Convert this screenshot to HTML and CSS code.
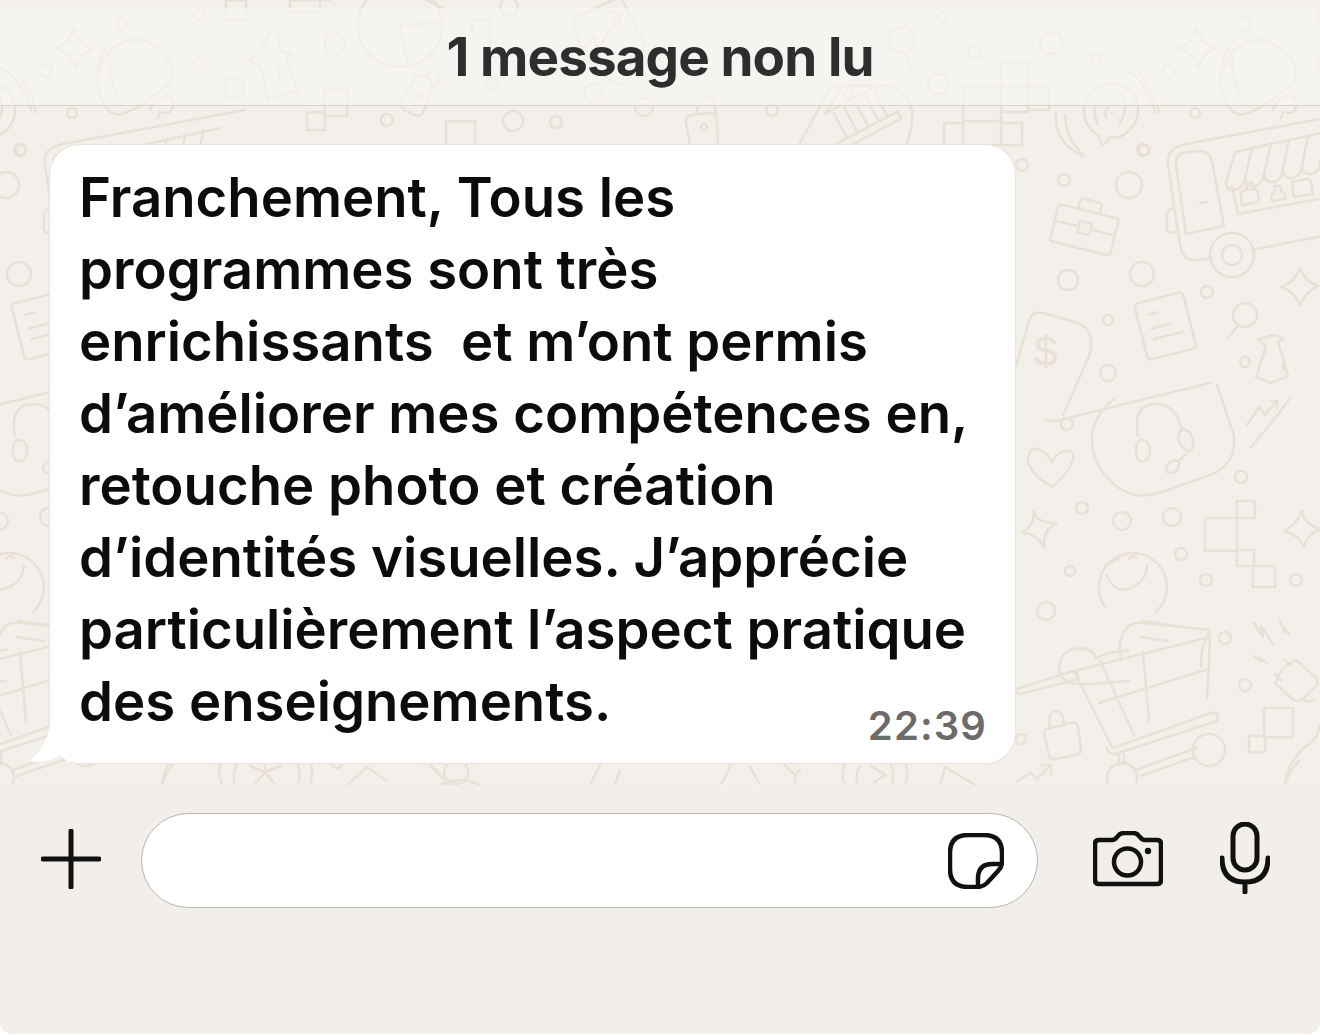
FILE: index.html
```html
<!DOCTYPE html>
<html lang="fr">
<head>
<meta charset="utf-8">
<title>1 message non lu</title>
<link rel="stylesheet" href="styles.css">
</head>
<body>
<div class="app">
  <main class="wall">
    <svg class="doodles" viewBox="0 0 1320 785" width="1320" height="785" aria-hidden="true">
      <defs>
        <g id="pattern">
          <!-- small circles -->
          <circle cx="122" cy="24" r="6"/><circle cx="46" cy="71" r="6"/><circle cx="199" cy="15" r="5"/><circle cx="199" cy="64" r="5"/><circle cx="234" cy="88" r="10"/><circle cx="335" cy="44" r="10"/><circle cx="72" cy="113" r="5"/><circle cx="21" cy="150" r="5"/><circle cx="387" cy="120" r="6"/><circle cx="513" cy="121" r="10"/><circle cx="556" cy="122" r="6"/><circle cx="492" cy="84" r="6"/><circle cx="593" cy="93" r="9"/><circle cx="644" cy="107" r="9"/><circle cx="509" cy="7" r="9"/><circle cx="772" cy="110" r="6"/><circle cx="938" cy="84" r="10"/><circle cx="974" cy="53" r="6"/><circle cx="942" cy="17" r="5"/><circle cx="1051" cy="43" r="11"/><circle cx="1096" cy="59" r="5"/>
          <circle cx="1022" cy="165" r="6"/><circle cx="1064" cy="180" r="6"/><circle cx="1129" cy="185" r="13"/><circle cx="1143" cy="150" r="6"/><circle cx="1068" cy="280" r="10"/><circle cx="1142" cy="274" r="12"/><circle cx="1207" cy="292" r="6"/><circle cx="1108" cy="320" r="5"/><circle cx="1108" cy="373" r="8"/><circle cx="1245" cy="362" r="5"/>
          <circle cx="1067" cy="424" r="6"/><circle cx="1241" cy="477" r="6"/><circle cx="1082" cy="508" r="6"/><circle cx="1122" cy="521" r="9"/><circle cx="1172" cy="517" r="9"/><circle cx="1181" cy="554" r="6"/><circle cx="1070" cy="571" r="5"/><circle cx="1206" cy="580" r="6"/><circle cx="1046" cy="611" r="9"/><circle cx="1225" cy="638" r="6"/><circle cx="1245" cy="685" r="6"/><circle cx="1296" cy="580" r="6"/><circle cx="1021" cy="739" r="5"/>
          <!-- sparkles -->
          <path d="M74 28q3 14 18 21q-13 5-17 19q-4-14-18-20q13-6 17-20z"/>
          <path d="M1300 268q4 13 18 18q-13 6-18 20q-4-14-19-19q14-5 19-19z"/>
          <path d="M1034 511q1 12 23 12q-14 5-13 24q-8-14-22-14q12-7 12-22z"/>
          <path d="M1302 511q2 13 18 18q-13 5-16 18q-6-13-20-16q13-7 18-20z"/>
          <!-- taco -->
          <path d="M100 95c-8-25 8-52 32-55c14-2 28 8 38 22c6 10 3 18-6 26c-14 12-28 22-42 26c-12 3-18-8-22-19z"/>
          <path d="M112 42c-14 12-18 32-12 56M107 55q6 4 1 10q5 4 1 10q6 4 3 10q5 4 3 10"/>
          <path d="M152 63h.1M158 72h.1M151 78h.1" stroke-width="3"/>
          <path d="M150 110q5-15 18-14q8 3 4 13q-3 6-10 3M158 118l2-6"/>
          <!-- pie -->
          <circle cx="400" cy="25" r="42"/><path d="M400 25l37 -2M400 25l8 42M408-10l38 20"/>
          <!-- plug -->
          <path d="M267 40q0-8 6-8t6 8l0 10l13 4l-6 3l12 34l-30 9l-7-34l-12-6l9-8z"/><path d="M278 68l2 14"/>
          <!-- lock tilted -->
          <path d="M404 110q-4-4-2-9l12-22q2-5 8-4l6 2q5 2 4 8l-8 26q-2 5-7 5z"/><path d="M429 80q-3-8 3-9q5 0 7 6t-6 10"/><circle cx="420" cy="95" r="2"/>
          <!-- squares -->
          <path d="M325 89h22v27h-22zM307 112h18v18h-18z"/>
          <path d="M446 121h29v30h-29zM472 30v-10h18v26"/>
          <path d="M226 0h20v20h-20zM290 0h30v12h-30zM330 0h-20"/>
          <!-- upward doodle -->
          <path d="M575 30q-4-12 8-16l30-14q8-4 12 5l18 34q4 8-4 14q-10 8-12 26q-1 6-8 4q-28-10-40-42zM582 50l12-14l4 12l22-34M606 12l15 2l-3 14"/>
          <!-- magnifier -->
          <circle cx="902" cy="40" r="13"/><path d="M906 54l7 16"/>
          <circle cx="1245" cy="315" r="12"/><path d="M1238 325l-10 13"/>
          <!-- bank -->
          <g transform="translate(858 112) rotate(-28)">
            <path d="M-30-14L0-30l30 16zM-30-14h60M-30 18h60M-35 26h70v-8h-70z"/><path d="M-22-10v28M-10-10v28M2-10v28M14-10v28M24-10v28"/><circle cx="0" cy="-20" r="4"/>
          </g>
          <path d="M799 145l28-52q4-8 14-8h40q22 0 30 22q4 14-5 38"/>
          <!-- lock -->
          <path d="M690 145l-4-22q-1-7 5-8l18-2q7 0 8 6l1 26M697 114q0-16 9-16t10 16"/><circle cx="704" cy="127" r="3"/>
          <!-- stepped squares -->
          <path d="M1001 62h27v24h-27zM963 86h38v35h-38zM1001 86h27v26h-27zM1028 86h21v24h-21zM944 123h19v22h-19zM963 121h38v24h-38zM1001 123h21v22h-21z"/>
          <!-- speech waves -->
          <path d="M1102 146l-3-10q-16-10-15-28q3-21 25-24q20-1 28 17q5 20-12 33q-9 5-14 3z"/>
          <path d="M1100 100q-10 10-2 24M1111 104q-8 6-5 14M1112 113h.1M1120 95q10 12 0 28M1137 70q16 18 22 42M1125 68q22 14 30 44M1065 115q0 22 18 40M1056 112q-3 30 27 44"/>
          <!-- truck -->
          <path d="M1368 110L1186 144q-20 4-18 20l12 81q3 17 18 15l14-2M1252 250l125-25"/>
          <path d="M1175 232q-10 3-8-8q-2-14 6-16M1176 166q-1-13 12-14l10-1q12 0 14 10l12 65l-38 8z"/><path d="M1200 203l8-1"/>
          <path d="M1235 152l108-24M1226 182l9-30"/>
          <path d="M1226 182q1 10 9 8t10-12q1 9 9 8t10-12q1 9 9 8t10-12q1 9 9 8t10-12q1 9 9 8t10-12q1 9 9 8"/>
          <path d="M1245 178l7-30M1264 174l7-30M1283 170l6-30M1302 166l6-30M1320 162l6-30"/>
          <path d="M1232 186l6 28l85-16M1242 205l-1-10q0-4 4-5l8-1q4 0 5 4l1 9zM1247 189q-1-5 3-6t5 5M1272 201q-2-6 3-10l-1-5h6l1 5q5 3 4 8zM1294 197l-2-12q0-4 4-4l10-2q4 0 5 3l2 12z"/>
          <circle cx="1232" cy="255" r="22"/><circle cx="1232" cy="255" r="10"/>
          <!-- briefcase -->
          <g transform="translate(1085 227) rotate(14)">
            <path d="M-28-16h56q3 0 3 3v32q0 3-3 3h-56q-3 0-3-3v-32q0-3 3-3zM-31 1h25M6 1h25M-6-5h12v12h-12zM-11-16v-8q0-3 3-3h16q3 0 3 3v8"/>
          </g>
          <!-- document -->
          <g transform="translate(1165 325) rotate(-14)">
            <path d="M-21-28h42q4 0 4 4v50q0 4-4 4h-42q-4 0-4-4v-50q0-4 4-4zM-14-14h10M-14 0h20M-14 11h30"/>
          </g>
          <!-- dollar tile -->
          <path d="M1005 392q4-4 8-16l16-55q3-10 14-8l32 9q16 5 16 21q0 12-6 22l-22 50"/>
          <text class="dollar" x="1034" y="366">$</text>
          <!-- plug right -->
          <path d="M1275 335l9 4l-6 3l10 34l-17 7l-15-6l10-30l-8-8zM1284 358l-1 12"/>
          <!-- big tile -->
          <path d="M1210 383l-146 36q-12 4-20 0M1290 398q-15 22-40 50"/>
          <!-- headset blob -->
          <path d="M1115 398q-23 18-23 42q0 17 10 31q14 20 34 24q12 2 32-5l42-15q16-6 22-20q5-18-1-28l-14-42"/>
          <path d="M1138 436q-6-32 18-32q20 0 26 26M1186 430q8 4 7 14t-7 6t-8-12q1-10 8-8zM1142 440q8 1 8 10t-6 11q-8 2-8-10q0-12 6-11zM1188 450q-2 6-10 11q-6-2-11 4q-3 8 4 8q8 0 8-10"/>
          <!-- heart -->
          <path d="M1052 487q-25-15-24-30q3-13 14-6q7 4 10 12q3-9 12-12q11-2 9 8q-4 15-21 28z"/>
          <!-- trending -->
          <path d="M1247 425l12-18l6 8l12-14M1270 401h7v7"/>
          <path d="M1016 782l14-9l7 6l14-14M1041 765h10v10"/>
          <!-- stepped squares right -->
          <path d="M1237 501h18v17h-18zM1205 518h32v33h-32zM1237 550h17v16h-17zM1253 566h22v21h-22z"/>
          <path d="M1264 708h29v29h-29zM1249 736h16v16h-16z"/>
          <!-- smile and cart -->
          <path d="M1106 608a34 34 0 1 1 50 4"/><path d="M1106 574q10 24 30 11q10-6 11-19M1112 563q2-5 7-3M1129 559q3-5 8-1"/>
          <path d="M1129 650q-22 2-33 8q-4-12-22-9q-15 3-15 21q2 16 30 14l40-3"/><path d="M1121 660q-5-22 8-34q4-4 15-3l66 7l-3 7q-6 8-6 30"/><path d="M1142 621l41 6M1140 637l27 4"/>
          <path d="M1020 688l53-17q6 1 5 8l-58 15q-4 0-4-3q0-2 4-3zM1074 671l136-34l-3 62M1074 671l38 76M1100 661l34 74M1143 652l6 70M1099 703l106-33M1113 748l98-35q7-2 7 4q0 4-4 5l-99 32q-6 1-8-6"/>
          <path d="M1119 755v10M1124 754v10M1136 770l60-22M1140 776l55-19"/>
          <circle cx="1122" cy="778" r="15"/><circle cx="1209" cy="750" r="16"/>
          <!-- right plug and bolts -->
          <path d="M1283 668l13-8l18 16q6 6 2 10l-13 13q-6 4-12-1l-16-15zM1281 680l-6-6M1290 665l-5-5M1302 699q4 4 14 1"/>
          <path d="M1254 623l9 14l-2-11l12 18M1280 620l4 12l-1-6l6 8M1254 656l8 6l-2-4l8 6"/>
          <!-- small lock -->
          <path d="M1046 729l25-6q6-1 7 4l3 22q0 5-5 6l-20 4q-6 1-7-4l-5-22q0-3 2-4zM1050 728q-3-16 6-17q8 0 8 14"/>
          <!-- tile bottom right -->
          <path d="M1285 785q3-26 25-42q8-5 10-18"/>
          <!-- bottom band -->
          <path d="M162 785q4-14 14-24M222 785q-6-16 1-30M310 785q5-16-2-28M235 785q-3-10 2-22M298 785q4-12-1-22"/>
          <path d="M265 772l-15-6M265 772l16-6M265 772l-10 12M265 772l10 12M265 772v-12"/><circle cx="337" cy="763" r="5"/>
          <path d="M347 785l20-18l20 14"/>
          <path d="M450 785l-20-20M440 785q20-10 40 0"/><circle cx="456" cy="772" r="12"/>
          <path d="M590 785l10-20M615 785l5-15M720 785q8-10 10-20M760 785l-10-18"/>
          <path d="M785 765l10 10v10M800 770l-5 5M845 785q-6-12 2-24M905 785q5-14-2-28M858 785q-4-10 2-18M892 785q3-10-1-20M870 766l16 9l-12 7"/>
          <path d="M940 785l5-18l30 18"/>
        </g>
      </defs>
      <use href="#pattern"/>
      <use href="#pattern" x="-1123"/>
      <use href="#pattern" x="1123"/>
    </svg>

    <header class="banner"><h1 class="banner-title">1 message non lu</h1></header>

    <article class="bubble">
      <svg class="bubble-tail" width="40" height="50" viewBox="0 0 40 50" aria-hidden="true">
        <path class="tail-edge" d="M21 0q0 28-20 46q-2 2 3 2q14 0 26-6q10 6 10 8v-50z"/>
      </svg>
      <p class="bubble-text">Franchement, Tous les<br>programmes sont très<br>enrichissants&nbsp; et m’ont permis<br>d’améliorer mes compétences en,<br>retouche photo et création<br>d’identités visuelles. J’apprécie<br>particulièrement l’aspect pratique<br>des enseignements.</p>
      <time class="bubble-time">22:39</time>
    </article>
  </main>

  <footer class="composer">
    <svg class="icon-plus" width="60" height="60" viewBox="0 0 60 60" aria-hidden="true">
      <path d="M30 2v56M2 30h56"/>
    </svg>
    <div class="field">
      <svg class="icon-sticker" width="56" height="56" viewBox="0 0 56 56" aria-hidden="true">
        <path d="M20 2h16q18 0 18 18v9q0 5-4 9L39 50q-4 4-10 4h-9Q2 54 2 36V20Q2 2 20 2z"/>
        <path d="M53 31H44q-13 0-14 13v10"/>
      </svg>
    </div>
    <svg class="icon-camera" width="70" height="56" viewBox="0 0 70 56" aria-hidden="true">
      <path d="M6 9h13q3 0 5-3l1-1q2-3 6-3h9q4 0 6 3l1 1q2 3 5 3h12q4 0 4 4v36q0 4-4 4H6q-4 0-4-4V13q0-4 4-4z"/>
      <circle cx="34.5" cy="31" r="13.5"/>
      <circle class="dot" cx="55" cy="20" r="3.2"/>
    </svg>
    <svg class="icon-mic" width="50" height="72" viewBox="0 0 50 72" aria-hidden="true">
      <rect x="13" y="2" width="24" height="46" rx="12"/>
      <path d="M2 36q0 24 23 24t23-24M25 60v10"/>
    </svg>
  </footer>
</div>
</body>
</html>
```

FILE: styles.css
```css
* { box-sizing: border-box; }

html, body {
  margin: 0;
  padding: 0;
  background: #ffffff;
}

body {
  font-family: "Inter", "Liberation Sans", sans-serif;
}

.app {
  width: 1320px;
  height: 1034px;
  display: flex;
  flex-direction: column;
  background: #f2efea;
  border-bottom-left-radius: 12px;
  border-bottom-right-radius: 12px;
  overflow: hidden;
}

.wall {
  position: relative;
  height: 785px;
  flex: none;
  padding-top: 8px;
  overflow: hidden;
  background: #f3f0eb;
}

.doodles {
  position: absolute;
  left: 0;
  top: 0;
  fill: none;
  stroke: #e8e1d6;
  stroke-width: 2.6;
  stroke-linecap: round;
  stroke-linejoin: round;
}

.dollar {
  font-family: "Liberation Sans", sans-serif;
  font-size: 42px;
  fill: #e8e1d6;
  stroke: none;
}

.banner {
  position: relative;
  height: 98px;
  display: flex;
  align-items: center;
  justify-content: center;
  background: rgba(248, 247, 243, 0.6);
  border-bottom: 1px solid #d6d3cd;
}

.banner-title {
  margin: 0;
  font-size: 53px;
  line-height: 56px;
  font-weight: 700;
  letter-spacing: -0.9px;
  color: #2e2e2e;
}

.bubble {
  position: relative;
  width: 965px;
  height: 618px;
  margin: 39px 0 0 50px;
  padding: 16px 29px 0;
  background: #ffffff;
  border-radius: 30px;
  box-shadow: 0 0 0 1px #e9e5de;
}

.bubble-tail {
  position: absolute;
  left: -20px;
  bottom: -1px;
}

.tail-edge {
  fill: #ffffff;
}

.bubble-text {
  margin: 0;
  font-size: 54.5px;
  line-height: 72px;
  font-weight: 600;
  letter-spacing: 0;
  color: #0c0c0c;
  white-space: nowrap;
}

.bubble-time {
  position: absolute;
  right: 28px;
  bottom: 14px;
  font-size: 40px;
  line-height: 46px;
  font-weight: 600;
  letter-spacing: 1.1px;
  color: #6b6b6b;
}

.composer {
  flex: 1;
  display: flex;
  align-items: flex-start;
  padding: 28px 50px 0 41px;
}

.composer svg {
  flex: none;
  fill: none;
  stroke: #111111;
  stroke-linecap: round;
  stroke-linejoin: round;
}

.icon-plus {
  margin-top: 16px;
  stroke-width: 5;
}

.field {
  width: 898px;
  height: 95px;
  margin-left: 40px;
  display: flex;
  align-items: center;
  justify-content: flex-end;
  padding-right: 33px;
  background: #ffffff;
  border: 1px solid #b7b5b0;
  border-radius: 48px;
}

.icon-sticker {
  stroke-width: 4.5;
}

.icon-camera {
  margin: 18px 0 0 55px;
  stroke-width: 4.5;
}

.icon-camera .dot {
  fill: #111111;
  stroke: none;
}

.icon-mic {
  margin: 9px 0 0 57px;
  stroke-width: 5;
}
```
